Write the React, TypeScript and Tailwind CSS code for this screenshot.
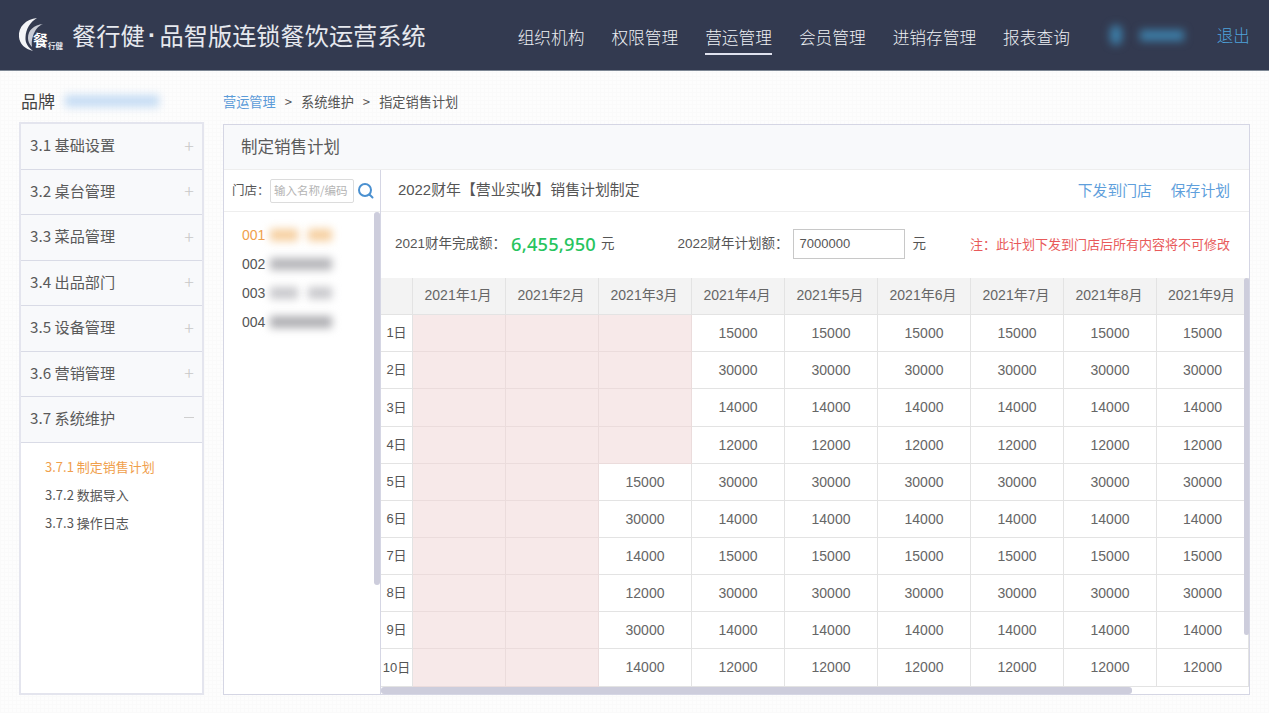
import React from "react";

const FONT = { fontFamily: '"Liberation Sans","Noto Sans CJK SC",sans-serif' };
const CJK = { fontFamily: '"Noto Sans CJK SC","Liberation Sans",sans-serif' };

const NAV = ["组织机构", "权限管理", "营运管理", "会员管理", "进销存管理", "报表查询"];
const SIDE = ["3.1 基础设置", "3.2 桌台管理", "3.3 菜品管理", "3.4 出品部门", "3.5 设备管理", "3.6 营销管理"];
const MONTHS = [1, 2, 3, 4, 5, 6, 7, 8, 9].map((m) => `2021年${m}月`);
const FULL = [15000, 30000, 14000, 12000, 30000, 14000, 15000, 30000, 14000, 12000];
const MAR = [0, 0, 0, 0, 15000, 30000, 14000, 12000, 30000, 14000];
const ROW_H = [37, 37, 38, 37, 37, 37, 37, 37, 37, 38];
const STORES: [string, string, string, boolean][] = [
  ["001", "#f6cf9f", "text-[#f0a04c]", true],
  ["002", "#b4b4b8", "", false],
  ["003", "#c8c8cc", "", true],
  ["004", "#aeaeb2", "", false],
];

function Logo() {
  return (
    <div className="relative h-[36px] w-[46px] shrink-0">
      <svg width="36" height="36" viewBox="0 0 36 36" className="block">
        <path d="M19 1C8 2 0 10 1 20c.6 7 6 12 14 14-5-4-8-8-7.500-14C8 12 12 5 19 1Z" fill="#f4f5f8" />
        <path d="M25 7C16 8 10 13 10 21c0 3 1 6 4 9-.5-3-.5-7 1-11 2-6 5-10 10-12Z" fill="#c9ccd6" />
      </svg>
      <span className="absolute left-[15px] top-[15px] text-[15px] font-bold leading-none text-white" style={CJK}>餐</span>
      <span className="absolute left-[30px] top-[25px] text-[7.500px] font-bold leading-none text-[#e6e8ee]" style={CJK}>行健</span>
    </div>
  );
}

function Blur({ w, color, className = "" }: { w: number; color: string; className?: string }) {
  return <span className={`inline-block h-[12px] blur-[4px] ${className}`} style={{ width: w, backgroundColor: color }} />;
}

function MenuRow({ label, open }: { label: string; open?: boolean }) {
  return (
    <div className="flex h-[45.500px] shrink-0 items-center justify-between border-b border-[#d9dbe6] bg-[#f8f9fb] pb-[3px] pl-[9px] pr-[8px] text-[15.200px] text-[#5a5a5a]" style={CJK}>
      <span>{label}</span>
      {open ? (
        <span className="block h-[1px] w-[10px] bg-[#cfcfcf]" />
      ) : (
        <span className="text-[18px] font-light leading-none text-[#c8c8c8]">+</span>
      )}
    </div>
  );
}

function Cell({ value, pink }: { value?: number; pink?: boolean }) {
  return (
    <div className={`flex items-center justify-center border-r border-b text-[14px] text-[#666] ${pink ? "border-[#ebdcdc] bg-[#f7e9e9]" : "border-[#e3e3e3] bg-white"}`}>
      {value ?? ""}
    </div>
  );
}

export default function App() {
  return (
    <div className="flex h-[713px] w-[1269px] flex-col overflow-hidden bg-[#fdfdfd] bg-[linear-gradient(#fafafa_1px,transparent_1px),linear-gradient(90deg,#fafafa_1px,transparent_1px)] bg-[size:4px_4px]" style={FONT}>
      <header className="flex h-[71px] shrink-0 items-center border-b border-[#7d8794] bg-[#333a50] pl-[18px]">
        <Logo />
        <h1 className="ml-[8px] flex items-center text-[24.200px] leading-none text-[#e6e8ee]" style={CJK}>
          <span>餐行健</span>
          <span className="w-[15px] text-center font-bold" style={FONT}>·</span>
          <span>品智版连锁餐饮运营系统</span>
        </h1>
        <nav className="ml-[92px] mt-[3px] flex items-center gap-[27px]">
          {NAV.map((n, i) => (
            <span key={n} className="relative text-[16.700px] font-light leading-[30px] text-[#eef0f4]" style={CJK}>
              {n}
              {i === 2 && <span className="absolute bottom-[-3px] left-0 h-[2px] w-full bg-[#dfe1ee]" />}
            </span>
          ))}
        </nav>
        <div className="ml-[40px] flex items-center gap-[18px]">
          <span className="h-[20px] w-[12px] rounded-full bg-[#3d7ea8] blur-[4px]" />
          <span className="h-[11px] w-[44px] bg-[#3d7ea8] blur-[4px]" />
        </div>
        <span className="ml-[33px] mt-[1px] text-[16.500px] font-light text-[#4fa3dc]" style={CJK}>退出</span>
      </header>

      <div className="flex min-h-0 flex-1 gap-[19px] px-[19px] pb-[18px]">
        <aside className="flex w-[185px] shrink-0 flex-col">
          <div className="flex h-[51px] shrink-0 items-center pl-[2px] pt-[8px] text-[17px] text-[#444]" style={CJK}>
            <span>品牌</span>
            <Blur w={94} color="#c5dcf4" className="ml-[10px]" />
          </div>
          <div className="flex min-h-0 flex-1 flex-col border-2 border-[#e4e5ee] bg-white">
            {SIDE.map((s) => <MenuRow key={s} label={s} />)}
            <MenuRow label="3.7 系统维护" open />
            <ul className="flex flex-col gap-[10px] pl-[24px] pt-[15px] text-[13px] leading-[18px] text-[#555]" style={CJK}>
              <li className="text-[#f0a04c]">3.7.1 制定销售计划</li>
              <li>3.7.2 数据导入</li>
              <li>3.7.3 操作日志</li>
            </ul>
          </div>
        </aside>

        <main className="flex min-w-0 flex-1 flex-col">
          <div className="flex h-[53px] shrink-0 items-center pt-[9px] text-[13.200px] text-[#555]" style={CJK}>
            <span className="text-[#5b9bd8]">营运管理</span>
            <span className="mx-[9px]">&gt;</span>
            <span>系统维护</span>
            <span className="mx-[9px]">&gt;</span>
            <span>指定销售计划</span>
          </div>
          <section className="flex min-h-0 flex-1 flex-col border border-[#d5d6e4] bg-white">
            <div className="flex h-[45px] shrink-0 items-center border-b border-[#eeeeee] bg-[#f8f9fb] pb-[1px] pl-[17px] text-[16.500px] text-[#5a5a5a]" style={CJK}>制定销售计划</div>
            <div className="flex min-h-0 flex-1">
              <div className="relative w-[157px] shrink-0 border-r border-[#d5d6e4]">
                <div className="flex h-[42px] items-center border-b border-[#eeeeee] pl-[8px] text-[12.500px] text-[#555]" style={CJK}>
                  <span className="w-[38px]">门店：</span>
                  <span className="flex h-[24px] w-[84px] items-center rounded-[2px] border border-[#dcdcdc] pl-[3px] text-[11.500px] text-[#b4b4b4]">输入名称/编码</span>
                  <svg width="17" height="17" viewBox="0 0 17 17" fill="none" className="ml-[3px]">
                    <circle cx="8" cy="8" r="6" stroke="#4a90d0" strokeWidth="2" />
                    <path d="M12.500 12.500L15.500 15.500" stroke="#4a90d0" strokeWidth="2" strokeLinecap="round" />
                  </svg>
                </div>
                <ul className="flex flex-col gap-[11px] pl-[18px] pt-[14px] text-[14px] leading-[18px] text-[#555]">
                  {STORES.map(([n, c, t, split]) => (
                    <li key={n} className={`flex items-center ${t}`}>
                      {n}
                      {split ? (
                        <span className="ml-[5px] flex gap-[10px]">
                          <Blur w={28} color={c} />
                          <Blur w={24} color={c} />
                        </span>
                      ) : (
                        <Blur w={62} color={c} className="ml-[5px]" />
                      )}
                    </li>
                  ))}
                </ul>
                <div className="absolute right-0 top-[42px] h-[373px] w-[6px] rounded-[3px] bg-[#cdcddc]" />
              </div>

              <div className="relative flex min-w-0 flex-1 flex-col">
                <div className="flex h-[42px] shrink-0 items-center justify-between border-b border-[#eeeeee] pl-[17px] pr-[19px] text-[14.900px] text-[#555]" style={FONT}>
                  <span>2022财年【营业实收】销售计划制定</span>
                  <div className="flex gap-[19px] text-[14.800px] text-[#5f9fdc]" style={CJK}>
                    <span>下发到门店</span>
                    <span>保存计划</span>
                  </div>
                </div>
                <div className="flex h-[66px] shrink-0 items-center pb-[2px] pl-[14px] pr-[19px] text-[13.500px] text-[#555]">
                  <span>2021财年完成额：</span>
                  <span className="ml-[5px] text-[18.300px] font-medium tracking-[0.200px] text-[#27c45e]" style={{ fontFamily: '"Noto Sans",sans-serif' }}>6,455,950</span>
                  <span className="ml-[5px]">元</span>
                  <span className="ml-[63px]">2022财年计划额：</span>
                  <span className="ml-[4px] flex h-[30px] w-[112px] items-center border border-[#c8c8c8] pl-[6px] text-[13px] text-[#555]">7000000</span>
                  <span className="ml-[8px]">元</span>
                  <span className="ml-auto text-[13px] text-[#e85a5a]" style={CJK}>注：此计划下发到门店后所有内容将不可修改</span>
                </div>
                <div className="relative min-h-0 flex-1 overflow-hidden">
                  <div
                    className="grid h-full w-[868px] grid-cols-[32px_repeat(8,93px)_92px]"
                    style={{ gridTemplateRows: `37px ${ROW_H.map((h) => h + "px").join(" ")}` }}
                  >
                    <div className="border-r border-b border-[#e3e3e3] bg-[#f3f3f3]" />
                    {MONTHS.map((m) => (
                      <div key={m} className="flex items-center justify-center border-r border-b border-[#e3e3e3] bg-[#f3f3f3] pb-[1px] pr-[2px] text-[14px] text-[#666]">{m}</div>
                    ))}
                    {FULL.map((v, r) => (
                      <React.Fragment key={r}>
                        <div className="flex items-center justify-center border-r border-b border-[#e3e3e3] bg-white text-[13px] text-[#555]">{r + 1}日</div>
                        <Cell pink />
                        <Cell pink />
                        {MAR[r] ? <Cell value={MAR[r]} /> : <Cell pink />}
                        {[0, 1, 2, 3, 4, 5].map((c) => <Cell key={c} value={v} />)}
                      </React.Fragment>
                    ))}
                  </div>
                  <div className="absolute right-0 top-0 h-[357px] w-[5px] rounded-[3px] bg-[#cdcddc]" />
                  <div className="absolute bottom-0 left-0 h-[7px] w-[751px] rounded-[3px] bg-[#cdcddc]" />
                </div>
              </div>
            </div>
          </section>
        </main>
      </div>
    </div>
  );
}
